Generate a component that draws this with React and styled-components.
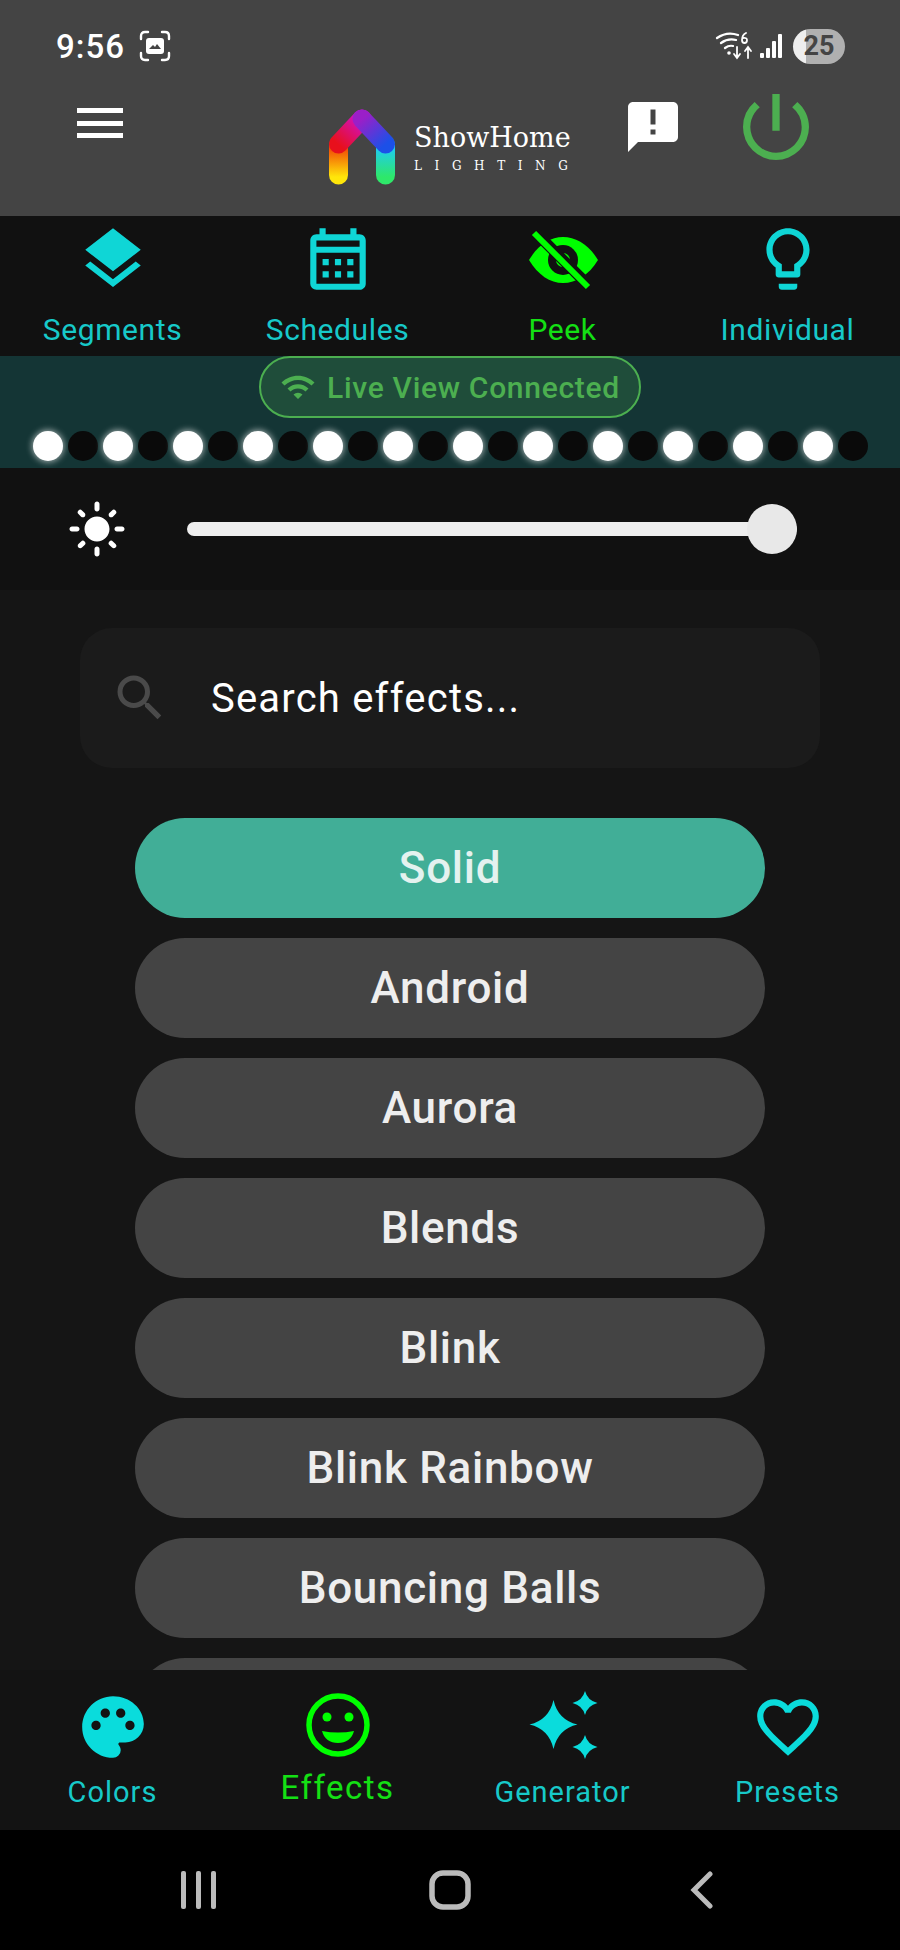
import styled, { createGlobalStyle } from 'styled-components';
import {
  MdLayers,
  MdOutlineCalendarMonth,
  MdOutlineLightbulb,
  MdPalette,
  MdFavoriteBorder,
  MdAnnouncement,
  MdPowerSettingsNew,
  MdSearch,
  MdWifi,
  MdLightMode,
} from 'react-icons/md';

const GlobalStyle = createGlobalStyle`
  html, body { margin: 0; padding: 0; background: #000; }
  * { box-sizing: border-box; }
`;

const Screen = styled.div`
  width: 900px;
  height: 1950px;
  display: flex;
  flex-direction: column;
  overflow: hidden;
  font-family: Roboto, "Liberation Sans", sans-serif;
  background: #151515;
`;

const Header = styled.header`
  height: 216px;
  flex: none;
  background: #444444;
  color: #fff;
`;

const StatusBar = styled.div`
  height: 92px;
  padding: 0 55px 0 56px;
  display: flex;
  align-items: center;
  justify-content: space-between;
`;

const StatusLeft = styled.div`
  display: flex;
  align-items: center;
  gap: 14px;
`;

const Time = styled.span`
  font-size: 33px;
  font-weight: 500;
  letter-spacing: 1px;
`;

const StatusRight = styled.div`
  display: flex;
  align-items: center;
  gap: 7px;
`;

const Battery = styled.div`
  width: 52px;
  height: 35px;
  margin-left: 2px;
  border-radius: 18px;
  background: linear-gradient(90deg, #eeeeee 0 25%, #b0b0b0 25%);
  color: #444;
  font-size: 27px;
  font-weight: 700;
  display: flex;
  align-items: center;
  justify-content: center;
`;

const Toolbar = styled.div`
  height: 124px;
  display: flex;
  align-items: flex-start;
`;

const MenuButton = styled.div`
  width: 46px;
  height: 30px;
  margin: 16px 0 0 77px;
  display: flex;
  flex-direction: column;
  justify-content: space-between;
  span { display: block; height: 5px; background: #fff; }
`;

const Logo = styled.div`
  margin: 17px 0 0 206px;
  display: flex;
  align-items: flex-start;
  gap: 19px;
`;

const LogoText = styled.div`
  width: 158px;
  padding-top: 14px;
  font-family: "DejaVu Serif", "Liberation Serif", serif;
`;

const LogoName = styled.div`
  font-size: 27px;
  line-height: 30px;
  white-space: nowrap;
`;

const LogoSub = styled.div`
  margin-top: 6px;
  font-size: 12px;
  line-height: 14px;
  letter-spacing: 12.6px;
  white-space: nowrap;
`;

const NoticeIcon = styled(MdAnnouncement)`
  width: 60px;
  height: 60px;
  margin: 5px 0 0 51px;
  color: #fff;
`;

const PowerIcon = styled(MdPowerSettingsNew)`
  width: 88px;
  height: 88px;
  margin: -9px 0 0 49px;
  color: #4caf50;
`;

const TabRow = styled.nav`
  height: 140px;
  flex: none;
  background: #111111;
  display: grid;
  grid-template-columns: repeat(4, 1fr);
`;

const Tab = styled.div`
  display: flex;
  flex-direction: column;
  align-items: center;
  padding-top: 6px;
  color: ${(p) => (p.$active ? '#00ff00' : '#0fd6d6')};
  svg { width: 74px; height: 74px; display: block; }
`;

const TabLabel = styled.span`
  margin-top: 15px;
  font-size: 30px;
  line-height: 38px;
  letter-spacing: 0.6px;
  color: ${(p) => (p.$active ? '#14e014' : '#17c9c9')};
`;

const LiveBar = styled.section`
  height: 112px;
  flex: none;
  background: #143535;
  display: flex;
  flex-direction: column;
  align-items: center;
`;

const LivePill = styled.div`
  width: 382px;
  height: 62px;
  border: 2px solid #4caf50;
  border-radius: 31px;
  background: rgba(76, 175, 80, 0.2);
  color: #4caf50;
  display: flex;
  align-items: center;
  gap: 11px;
  padding-left: 19px;
  font-size: 30px;
  font-weight: 500;
  letter-spacing: 0.7px;
  white-space: nowrap;
  svg { width: 36px; height: 36px; flex: none; }
`;

const DotRow = styled.div`
  display: flex;
  gap: 5px;
  margin-top: 13px;
`;

const Dot = styled.span`
  width: 30px;
  height: 30px;
  border-radius: 50%;
  background: ${(p) => (p.$on ? '#ffffff' : '#0a0a0a')};
  box-shadow: ${(p) => (p.$on ? '0 0 6px 1px rgba(255,255,255,0.6)' : 'none')};
`;

const BrightnessRow = styled.div`
  height: 122px;
  flex: none;
  background: #111111;
  display: flex;
  align-items: center;
  padding-left: 67px;
  color: #fff;
  svg { width: 60px; height: 60px; flex: none; }
`;

const SliderTrack = styled.div`
  width: 610px;
  height: 14px;
  margin-left: 60px;
  border-radius: 7px;
  background: #eeeeee;
  display: flex;
  align-items: center;
  justify-content: flex-end;
`;

const SliderThumb = styled.div`
  width: 50px;
  height: 50px;
  flex: none;
  border-radius: 50%;
  background: #e8e8e8;
`;

const Main = styled.main`
  flex: 1;
  min-height: 0;
  overflow: hidden;
  padding-top: 38px;
  background: #151515;
`;

const SearchBox = styled.div`
  width: 740px;
  height: 140px;
  margin: 0 auto 50px;
  border-radius: 32px;
  background: #1b1b1b;
  display: flex;
  align-items: center;
  padding-left: 30px;
  color: #fff;
  font-size: 40px;
  letter-spacing: 1.2px;
  svg { width: 60px; height: 60px; color: #4a4a4a; margin-right: 41px; flex: none; }
`;

const EffectList = styled.div`
  width: 630px;
  margin: 0 auto;
  display: flex;
  flex-direction: column;
  gap: 20px;
`;

const EffectButton = styled.div`
  height: 100px;
  flex: none;
  border-radius: 50px;
  background: ${(p) => (p.$active ? '#41ae97' : '#444444')};
  color: ${(p) => (p.$active ? '#e4f2ef' : '#eeeeee')};
  font-size: 44px;
  font-weight: 500;
  letter-spacing: 0.7px;
  display: flex;
  align-items: center;
  justify-content: center;
`;

const BottomNav = styled.nav`
  height: 160px;
  flex: none;
  background: #131313;
  display: grid;
  grid-template-columns: repeat(4, 1fr);
`;

const NavItem = styled.div`
  display: flex;
  flex-direction: column;
  align-items: center;
  padding-top: 20px;
  color: ${(p) => (p.$active ? '#00ff00' : '#0adcdc')};
  svg { width: 74px; height: 74px; display: block; }
`;

const NavLabel = styled.span`
  font-size: ${(p) => (p.$active ? '33px' : '29px')};
  line-height: 36px;
  letter-spacing: ${(p) => (p.$active ? '1.5px' : '1px')};
  margin-top: ${(p) => (p.$active ? '6px' : '10px')};
  color: ${(p) => (p.$active ? '#14e014' : '#17c9c9')};
`;

const SystemNav = styled.div`
  height: 120px;
  flex: none;
  background: #000;
  color: #bbbbbb;
  padding: 0 72px;
  display: grid;
  grid-template-columns: repeat(3, 1fr);
  align-items: center;
  justify-items: center;
  svg { display: block; }
`;

// the last row is mostly hidden behind the bottom nav, its label can't be read
const EFFECTS = ['Solid', 'Android', 'Aurora', 'Blends', 'Blink', 'Blink Rainbow', 'Bouncing Balls', ''];

function EyeOffIcon() {
  return (
    <svg viewBox="-2 -2 74 74" fill="none">
      <path d="M1 36 C10 21 22 13 35 13 C48 13 61 21 70 36 C61 51 48 59 35 59 C22 59 10 51 1 36 Z" fill="currentColor" />
      <circle cx="35" cy="36" r="15" fill="#111111" />
      <circle cx="35" cy="36" r="7" fill="currentColor" />
      <path d="M9 10 L63 64" stroke="#111111" strokeWidth="11" />
      <path d="M6 9 L60 63" stroke="currentColor" strokeWidth="6" />
    </svg>
  );
}

function SmileIcon() {
  return (
    <svg viewBox="0 0 74 74">
      <circle cx="37" cy="35" r="29" fill="none" stroke="currentColor" strokeWidth="5.5" />
      <circle cx="26" cy="27" r="4.5" fill="currentColor" />
      <circle cx="48" cy="27" r="4.5" fill="currentColor" />
      <path d="M21 41 Q37 44 53 41 C51 49 45 53 37 53 C29 53 23 49 21 41 Z" fill="currentColor" />
    </svg>
  );
}

function SparkleIcon() {
  return (
    <svg viewBox="0 0 74 74" fill="currentColor">
      <path d="M27.500 10 Q32 30 51.500 34.500 Q32 39 27.500 59 Q23 39 3.500 34.500 Q23 30 27.500 10 Z" />
      <path d="M59 1 Q61.500 10.500 71.500 13 Q61.500 15.500 59 25 Q56.500 15.500 46.500 13 Q56.500 10.500 59 1 Z" />
      <path d="M59 45 Q61.500 54.500 71.500 57 Q61.500 59.500 59 69 Q56.500 59.500 46.500 57 Q56.500 54.500 59 45 Z" />
    </svg>
  );
}

function HouseLogo() {
  return (
    <svg width="66" height="76" viewBox="0 0 66 76" fill="none" strokeWidth="19" strokeLinecap="round">
      <defs>
        <linearGradient id="legLeft" gradientUnits="userSpaceOnUse" x1="0" y1="36" x2="0" y2="68">
          <stop offset="0" stopColor="#f03a05" />
          <stop offset="1" stopColor="#ffe60a" />
        </linearGradient>
        <linearGradient id="legRight" gradientUnits="userSpaceOnUse" x1="0" y1="36" x2="0" y2="68">
          <stop offset="0" stopColor="#1ec8ff" />
          <stop offset="1" stopColor="#2ee86a" />
        </linearGradient>
        <linearGradient id="roofLeft" gradientUnits="userSpaceOnUse" x1="10" y1="36" x2="33" y2="10">
          <stop offset="0" stopColor="#e8101c" />
          <stop offset="1" stopColor="#d010c8" />
        </linearGradient>
        <linearGradient id="roofRight" gradientUnits="userSpaceOnUse" x1="33" y1="10" x2="56" y2="36">
          <stop offset="0" stopColor="#9a1fc8" />
          <stop offset="1" stopColor="#1c50e8" />
        </linearGradient>
      </defs>
      <path d="M9.500 36 V66" stroke="url(#legLeft)" />
      <path d="M56.500 36 V66" stroke="url(#legRight)" />
      <path d="M9.500 35 L33 10" stroke="url(#roofLeft)" />
      <path d="M33 10 L56.500 35" stroke="url(#roofRight)" />
    </svg>
  );
}

function App() {
  return (
    <Screen>
      <GlobalStyle />
      <Header>
        <StatusBar>
          <StatusLeft>
            <Time>9:56</Time>
            <svg width="32" height="32" viewBox="0 0 32 32" fill="none" stroke="#fff" strokeWidth="2.4" strokeLinecap="round">
              <path d="M2 9 V6 Q2 2 6 2 H9 M23 2 H26 Q30 2 30 6 V9 M30 23 V26 Q30 30 26 30 H23 M9 30 H6 Q2 30 2 26 V23" />
              <rect x="7" y="8" width="18" height="16" rx="3" fill="#fff" stroke="none" />
              <path d="M10 19 L14 15 L16 17 L18 14 L22 19 Z" fill="#444" stroke="none" />
            </svg>
          </StatusLeft>
          <StatusRight>
            <svg width="38" height="28" viewBox="0 0 38 28" fill="none" stroke="#fff" strokeWidth="2.2" strokeLinecap="round">
              <path d="M2 6 Q12 -1 23 3 M6 11 Q13 6 21 8 M10 16 Q14 13 18 14" />
              <circle cx="14" cy="21" r="1.8" fill="#fff" stroke="none" />
              <path d="M22 15 V25 M19 22 L22 26 L25 22 M33 26 V16 M30 19 L33 15 L36 19" strokeWidth="1.8" />
              <path d="M31 1 Q27 3 27 8 Q27 11 29.500 11 Q32 11 32 8 Q32 5.500 28 6" strokeWidth="1.8" />
            </svg>
            <svg width="24" height="26" viewBox="0 0 24 26" fill="#fff">
              <rect x="0" y="20" width="4" height="5" rx="1" />
              <rect x="6" y="15" width="4" height="10" rx="1" />
              <rect x="12" y="8" width="4" height="17" rx="1" />
              <rect x="18" y="1" width="4" height="24" rx="1" />
            </svg>
            <Battery>25</Battery>
          </StatusRight>
        </StatusBar>
        <Toolbar>
          <MenuButton>
            <span />
            <span />
            <span />
          </MenuButton>
          <Logo>
            <HouseLogo />
            <LogoText>
              <LogoName>ShowHome</LogoName>
              <LogoSub>LIGHTING</LogoSub>
            </LogoText>
          </Logo>
          <NoticeIcon />
          <PowerIcon />
        </Toolbar>
      </Header>
      <TabRow>
        <Tab>
          <MdLayers />
          <TabLabel>Segments</TabLabel>
        </Tab>
        <Tab>
          <MdOutlineCalendarMonth />
          <TabLabel>Schedules</TabLabel>
        </Tab>
        <Tab $active>
          <EyeOffIcon />
          <TabLabel $active>Peek</TabLabel>
        </Tab>
        <Tab>
          <MdOutlineLightbulb />
          <TabLabel>Individual</TabLabel>
        </Tab>
      </TabRow>
      <LiveBar>
        <LivePill>
          <MdWifi />
          Live View Connected
        </LivePill>
        <DotRow>
          {Array.from({ length: 24 }, (_, i) => (
            <Dot key={i} $on={i % 2 === 0} />
          ))}
        </DotRow>
      </LiveBar>
      <BrightnessRow>
        <MdLightMode />
        <SliderTrack>
          <SliderThumb />
        </SliderTrack>
      </BrightnessRow>
      <Main>
        <SearchBox>
          <MdSearch />
          Search effects...
        </SearchBox>
        <EffectList>
          {EFFECTS.map((name, i) => (
            <EffectButton key={i} $active={i === 0}>
              {name}
            </EffectButton>
          ))}
        </EffectList>
      </Main>
      <BottomNav>
        <NavItem>
          <MdPalette />
          <NavLabel>Colors</NavLabel>
        </NavItem>
        <NavItem $active>
          <SmileIcon />
          <NavLabel $active>Effects</NavLabel>
        </NavItem>
        <NavItem>
          <SparkleIcon />
          <NavLabel>Generator</NavLabel>
        </NavItem>
        <NavItem>
          <MdFavoriteBorder />
          <NavLabel>Presets</NavLabel>
        </NavItem>
      </BottomNav>
      <SystemNav>
        <svg width="35" height="38" viewBox="0 0 35 38" fill="currentColor">
          <rect x="0" y="0" width="5" height="38" rx="2" />
          <rect x="15" y="0" width="5" height="38" rx="2" />
          <rect x="30" y="0" width="5" height="38" rx="2" />
        </svg>
        <svg width="42" height="40" viewBox="0 0 42 40" fill="none" stroke="currentColor" strokeWidth="5.5">
          <rect x="3" y="3" width="36" height="34" rx="11" />
        </svg>
        <svg width="24" height="38" viewBox="0 0 24 38" fill="none" stroke="currentColor" strokeWidth="5" strokeLinecap="round">
          <path d="M20 3 L4 19 L20 35" />
        </svg>
      </SystemNav>
    </Screen>
  );
}

export default App;
